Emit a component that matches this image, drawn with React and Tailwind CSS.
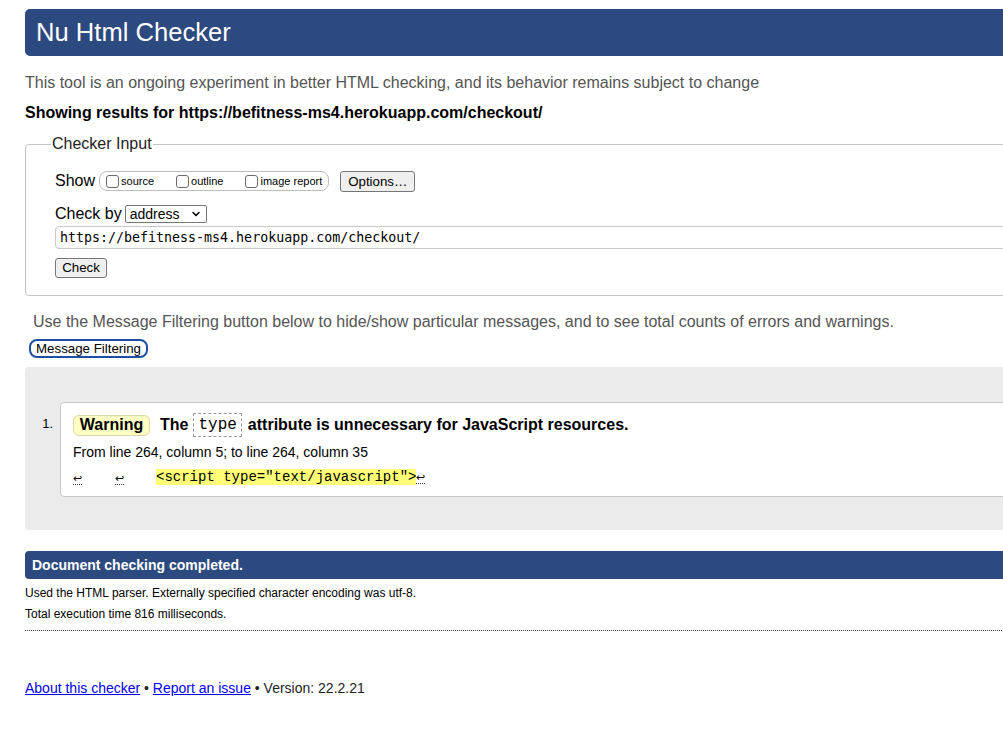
import { ChevronDown } from "lucide-react";

const sans = "font-['Liberation_Sans',Arial,sans-serif]";

function Box({ label }) {
  return (
    <span className="flex items-center">
      <span className="h-[13px] w-[13px] rounded-[3px] border border-[#6b6b6b] bg-white" />
      <span className="ml-[2px] text-[11px] leading-[13px]">{label}</span>
    </span>
  );
}

function Ret() {
  return <span className="inline-block border-b border-dotted border-[#333] text-[11px] leading-[12px]">↩</span>;
}

export default function App() {
  return (
    <div className={`h-[747px] w-full overflow-hidden bg-white text-black ${sans}`}>
      <div className="w-[1100px] pl-[25px] pt-[9px]">
        <h1 className="h-[47px] rounded-l-[5px] bg-[#2c4a80] pl-[11px] text-[25.6px] font-normal leading-[47px] text-white">
          Nu Html Checker
        </h1>
        <p className="mt-[18px] text-[16px] leading-[18px] text-[#555]">
          This tool is an ongoing experiment in better HTML checking, and its behavior remains subject to change
        </p>
        <p className="mt-[12px] text-[16px] font-bold leading-[18px]">
          Showing results for https://befitness-ms4.herokuapp.com/checkout/
        </p>

        <fieldset className="mt-[13px] rounded-l-[4px] border border-[#c4c4c4] pb-[17px] pl-[29px]">
          <legend className="ml-[-4px] px-[1px] text-[16px] leading-[18px] text-[#222]">Checker Input</legend>
          <div className="mt-[17px] flex h-[22px] items-center text-[16px]">
            <span>Show</span>
            <div className="ml-[4px] flex h-[20px] items-center gap-[22px] rounded-[8px] border border-[#bdbdbd] pl-[6px] pr-[6px]">
              <Box label="source" />
              <Box label="outline" />
              <Box label="image report" />
            </div>
            <button className="ml-[11px] h-[21px] w-[75px] rounded-[3px] border border-[#767676] bg-[#efefef] text-[13.3px] leading-[19px]">
              Options…
            </button>
          </div>
          <div className="mt-[13px] flex h-[18px] items-center text-[16px]">
            <span>Check by</span>
            <div className="ml-[3px] flex h-[18px] w-[82px] items-center justify-between rounded-[2px] border border-[#767676] pl-[4px] pr-[4px] text-[14px]">
              <span>address</span>
              <ChevronDown size={12} strokeWidth={3} />
            </div>
          </div>
          <div className="mt-[3px] h-[23px] rounded-l-[4px] border border-[#c8c8c8] pl-[4px] font-['DejaVu_Sans_Mono',monospace] text-[13.3px] leading-[21px]">
            https://befitness-ms4.herokuapp.com/checkout/
          </div>
          <button className="mt-[9px] block h-[20px] w-[52px] rounded-[3px] border border-[#767676] bg-[#efefef] text-[13.3px] leading-[18px]">
            Check
          </button>
        </fieldset>

        <p className="mt-[17px] pl-[8px] text-[16px] leading-[18px] text-[#555]">
          Use the Message Filtering button below to hide/show particular messages, and to see total counts of errors and warnings.
        </p>
        <button className="ml-[4px] mt-[8px] block h-[19px] w-[119px] rounded-[8px] border-2 border-[#1d4ea3] bg-white text-[13.3px] leading-[15px]">
          Message Filtering
        </button>

        <div className="mt-[9px] h-[163px] rounded-l-[4px] bg-[#ebebeb] pt-[35px]">
          <div className="flex">
            <span className="w-[35px] pr-[7px] pt-[15px] text-right text-[13px] leading-[14px]">1.</span>
            <div className="h-[95px] flex-1 rounded-l-[4px] border border-[#c8c8c8] bg-white pl-[12px] pt-[10px]">
              <div className="flex h-[24px] items-center text-[16px] font-bold">
                <span className="flex h-[21px] w-[77px] items-center justify-center rounded-[6px] border border-[#d8d8a8] bg-[#ffffc4]">
                  Warning
                </span>
                <span className="ml-[10px]">The</span>
                <span className="ml-[5px] flex h-[24px] items-center border border-dashed border-[#999] px-[4px] font-['Liberation_Mono',monospace] text-[16px] font-normal">
                  type
                </span>
                <span className="ml-[6px]">attribute is unnecessary for JavaScript resources.</span>
              </div>
              <p className="mt-[7px] text-[14px] leading-[16px]">From line 264, column 5; to line 264, column 35</p>
              <div className="mt-[9px] flex h-[16px] items-center">
                <span className="w-[42px]"><Ret /></span>
                <span className="w-[41px]"><Ret /></span>
                <span className="bg-[#ffff77] font-['Liberation_Mono',monospace] text-[14px] leading-[16px]">
                  &lt;script type="text/javascript"&gt;
                </span>
                <Ret />
              </div>
            </div>
          </div>
        </div>

        <div className="mt-[21px] h-[28px] rounded-l-[4px] bg-[#2c4a80] pl-[7px] text-[14px] font-bold leading-[28px] text-white">
          Document checking completed.
        </div>
        <p className="mt-[7px] text-[12px] leading-[14px]">Used the HTML parser. Externally specified character encoding was utf-8.</p>
        <p className="mt-[7px] text-[12px] leading-[14px]">Total execution time 816 milliseconds.</p>
        <div className="mt-[9px] border-t border-dotted border-[#444]" />

        <p className="mt-[49px] text-[14px] leading-[16px] text-[#222]">
          <a href="#" className="text-[#0000ee] underline">About this checker</a>
          {" • "}
          <a href="#" className="text-[#0000ee] underline">Report an issue</a>
          {" • Version: 22.2.21"}
        </p>
      </div>
    </div>
  );
}
